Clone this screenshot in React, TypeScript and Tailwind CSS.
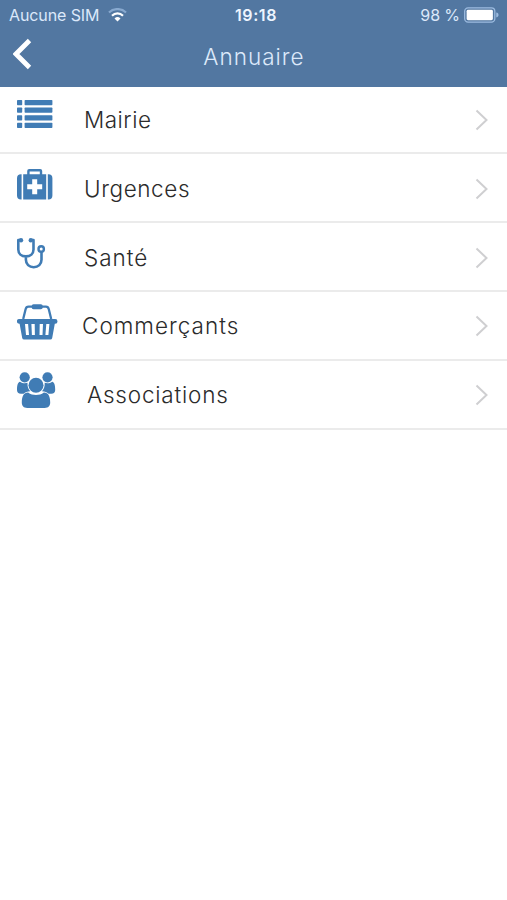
import type { ReactNode } from 'react'

interface Entry {
  label: string
  icon: ReactNode
  rowClass: string
  labelClass: string
  chevronClass: string
}

function ListIcon() {
  return (
    <svg width="36" height="29" viewBox="0 0 36 29" fill="currentColor">
      {[0, 7.6, 15.2, 22.8].map((y) => (
        <g key={y}>
          <rect x="0" y={y} width="5.2" height="5.2" rx="0.7" />
          <rect x="7.6" y={y} width="27.8" height="5.2" rx="0.7" />
        </g>
      ))}
    </svg>
  )
}

function MedkitIcon() {
  return (
    <svg width="36" height="32" viewBox="0 0 36 32" fill="currentColor">
      <path d="M4.6 5.2v25.2H4a4 4 0 0 1-4-4V9.2a4 4 0 0 1 4-4z" />
      <path d="M30.8 5.2v25.2h.6a4 4 0 0 0 4-4V9.2a4 4 0 0 0-4-4z" />
      <path
        fillRule="evenodd"
        d="M6.2 5.200h4V2a2 2 0 0 1 2-2h11a2 2 0 0 1 2 2v3.200h4v25.200h-23zM12.600 5.200h10.200V2.500H12.600zM15.200 10.200v5h-5v5h5v5h5v-5h5v-5h-5v-5z"
      />
    </svg>
  )
}

function StethoscopeIcon() {
  return (
    <svg width="29" height="32" viewBox="0 0 29 32" fill="none">
      <path
        d="M3.500 2H1.300v9.500c0 4 3.100 6.900 7.600 6.900s7.600-2.900 7.600-6.900V2h-2.200M8.900 18.500v3.300c0 4.300 3.200 7.400 7.800 7.400s7.800-3.100 7.800-7.400v-8"
        stroke="currentColor"
        strokeWidth="2.600"
        strokeLinejoin="round"
      />
      <circle cx="4" cy="2.200" r="2.200" fill="currentColor" />
      <circle cx="13.800" cy="2.200" r="2.200" fill="currentColor" />
      <circle cx="24.200" cy="11" r="2.700" stroke="currentColor" strokeWidth="2.400" />
    </svg>
  )
}

function BasketIcon() {
  return (
    <svg width="41" height="37" viewBox="0 0 41 37" fill="currentColor">
      <path
        d="M6.200 15 8.600 5.200c.4-1.700 1.300-2.500 2.900-2.500h17.400c1.600 0 2.500.8 2.900 2.500L34.200 15"
        fill="none"
        stroke="currentColor"
        strokeWidth="2.300"
      />
      <rect x="14.700" y="0.200" width="11" height="5" rx="1.800" />
      <path
        fillRule="evenodd"
        d="M2.200 15.100h36a2.300 2.300 0 0 1 0 4.600h-.4L35.200 34a2 2 0 0 1-2 1.600H7.200a2 2 0 0 1-2-1.600L2.600 19.700h-.4a2.300 2.300 0 0 1 0-4.600zM8 19.900l1 11.200h3l-.9-11.200zM14.400 19.900l.5 11.200h3l-.2-11.200zM22.700 19.900l-.2 11.200h3l.5-11.200zM29.300 19.900l-.9 11.200h3l1-11.200z"
      />
    </svg>
  )
}

function UsersIcon() {
  return (
    <svg width="39" height="37" viewBox="0 0 39 37" fill="currentColor">
      <circle cx="7.700" cy="5.300" r="5.100" />
      <circle cx="30.500" cy="5.300" r="5.100" />
      <path d="M3 9.700c1.700 1.300 3 1.600 4.800 1.600 1 0 1.800-.2 2.700-.5-.2 4 .8 6.200 2.700 8.400-2.900.1-5 .9-6.600 2.500H4c-2.700 0-4-1.200-4-3.600 0-4.400.6-7.800 3-8.400z" />
      <path d="M35.200 9.700c-1.700 1.300-3 1.600-4.800 1.600-1 0-1.800-.2-2.700-.5.2 4-.8 6.200-2.700 8.400 2.900.1 5 .9 6.600 2.500h2.600c2.700 0 4-1.200 4-3.600 0-4.400-.6-7.800-3-8.400z" />
      <circle cx="19" cy="13.200" r="7.500" />
      <path d="M11.100 20.500c2.500 1.800 4.900 2.500 7.900 2.500s5.400-.7 7.900-2.500c4.500 0 6.300 4 6.300 10 0 3.600-2 5.400-5.400 5.400H10.200c-3.400 0-5.400-1.800-5.400-5.400 0-6 1.800-10 6.300-10z" />
    </svg>
  )
}

const entries: Entry[] = [
  {
    label: 'Mairie',
    icon: <ListIcon />,
    rowClass: 'h-[67px] pt-[13px]',
    labelClass: 'ml-[67px] mt-[3px] tracking-[0.5px]',
    chevronClass: 'mt-[9px]',
  },
  {
    label: 'Urgences',
    icon: <MedkitIcon />,
    rowClass: 'h-[69px] pt-[15px]',
    labelClass: 'ml-[67px] mt-[3px] tracking-[0.6px]',
    chevronClass: 'mt-[9px]',
  },
  {
    label: 'Santé',
    icon: <StethoscopeIcon />,
    rowClass: 'h-[69px] pt-[15px]',
    labelClass: 'ml-[67px] mt-[3px] tracking-[1px]',
    chevronClass: 'mt-[9px]',
  },
  {
    label: 'Commerçants',
    icon: <BasketIcon />,
    rowClass: 'h-[69px] pt-[12px]',
    labelClass: 'ml-[65px] mt-[5px] tracking-[1px]',
    chevronClass: 'mt-[11px]',
  },
  {
    label: 'Associations',
    icon: <UsersIcon />,
    rowClass: 'h-[69px] pt-[11px]',
    labelClass: 'ml-[70px] mt-[6px] tracking-[0.8px]',
    chevronClass: 'mt-[12px]',
  },
]

function StatusBar() {
  return (
    <div className="grid h-[30px] grid-cols-3 items-center pl-[9px] pr-[8px] text-[16px] leading-none text-[#dbe8fa]">
      <div className="flex items-center gap-[9px]">
        <span className="whitespace-nowrap tracking-[-0.1px]">Aucune SIM</span>
        <svg width="19" height="14" viewBox="0 0 19 14" fill="none">
          <path d="M1 4.500a12.200 12.200 0 0 1 17 0" stroke="#88a9cf" strokeWidth="2.200" />
          <path d="M4 7.700a7.900 7.900 0 0 1 11 0" stroke="#fff" strokeWidth="2.200" />
          <path d="m9.500 13.500-3-3.100a4.300 4.300 0 0 1 6 0z" fill="#fff" />
        </svg>
      </div>
      <span className="pl-[4px] text-center font-semibold tracking-[0.6px] text-[#edf5ff]">19:18</span>
      <div className="flex items-center justify-end gap-[4px]">
        <span className="whitespace-nowrap tracking-[-0.1px]">98 %</span>
        <svg width="35" height="16" viewBox="0 0 36 16">
          <rect x="0.700" y="0.700" width="31" height="14.600" rx="3.500" fill="none" stroke="#9dbce0" strokeWidth="1.300" />
          <rect x="2.700" y="2.700" width="27" height="10.600" rx="1.500" fill="#fff" />
          <path d="M33.200 5.500c1.500.3 2.300 1.200 2.300 2.500s-.8 2.200-2.300 2.500z" fill="#9dbce0" />
        </svg>
      </div>
    </div>
  )
}

export default function App() {
  return (
    <div className="min-h-[900px] w-full bg-white font-['Inter',sans-serif]">
      <header className="h-[87px] bg-[#5277a1]">
        <StatusBar />
        <div className="grid h-[54px] grid-cols-3 items-center px-[13px]">
          <svg width="19" height="32" viewBox="0 0 19 32" fill="none" className="-mt-[6px]">
            <path d="M16.500 2.500 3 16l13.500 13.500" stroke="#fff" strokeWidth="4.800" />
          </svg>
          <h1 className="pl-px text-center text-[22.500px] font-light leading-none tracking-[1px] text-[#dce9fa]">
            Annuaire
          </h1>
        </div>
      </header>
      <ul>
        {entries.map((entry) => (
          <li
            key={entry.label}
            className={`flex items-start border-b-2 border-[#ebebeb] pl-[17px] pr-[18px] ${entry.rowClass}`}
          >
            <span className="w-0 text-[#407cb5]">{entry.icon}</span>
            <span className={`text-[22.500px] font-light leading-[34px] text-[#2b2b2b] ${entry.labelClass}`}>
              {entry.label}
            </span>
            <svg
              width="14"
              height="22"
              viewBox="0 0 14 22"
              fill="none"
              className={`ml-auto ${entry.chevronClass}`}
            >
              <path d="m1.500 1.500 10 9.500-10 9.500" stroke="#cfcfd1" strokeWidth="2" />
            </svg>
          </li>
        ))}
      </ul>
    </div>
  )
}
